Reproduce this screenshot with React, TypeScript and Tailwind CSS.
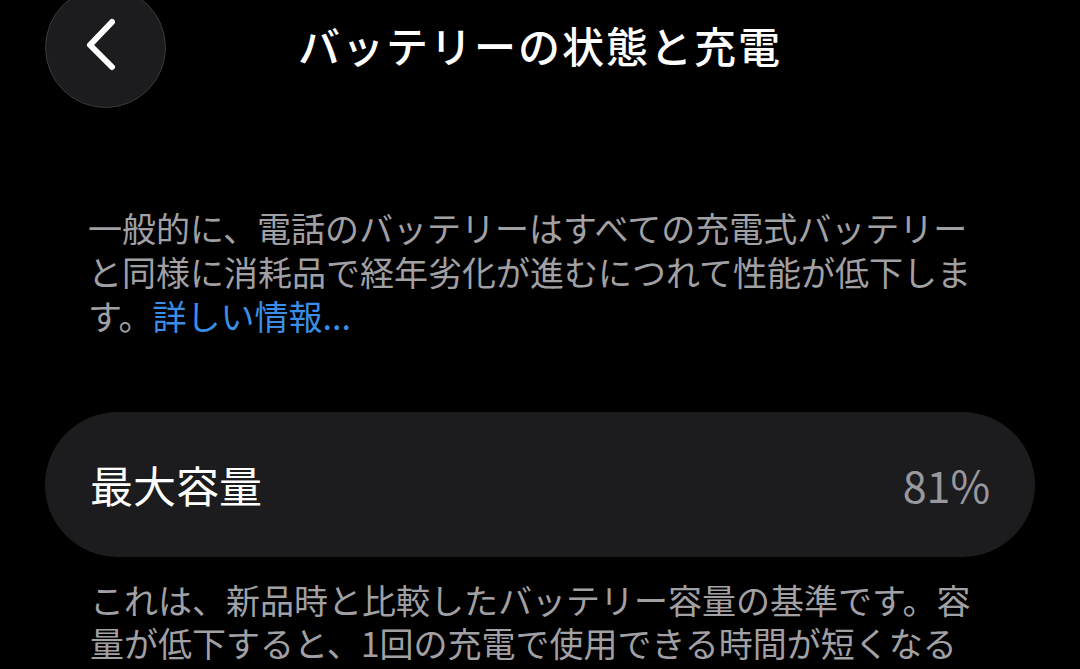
import React from 'react';

const jp = { fontFamily: '"Noto Sans CJK JP", "Noto Sans", sans-serif' };

function BackButton() {
  return (
    <button className="w-[121px] h-[121px] -mt-[13px] rounded-full bg-[#1c1c1e] border-[1.5px] border-[#3a3a3c] flex items-center justify-center">
      <svg width="60" height="60" viewBox="0 0 60 60" fill="none">
        <path d="M37 8 L15 31 L37 53" stroke="white" strokeWidth="6" strokeLinecap="round" strokeLinejoin="round" transform="translate(-1 -4)" />
      </svg>
    </button>
  );
}

export default function App() {
  return (
    <div className="w-[1080px] h-[669px] bg-black overflow-hidden text-white" style={jp}>
      {/* Header */}
      <div className="grid grid-cols-[1fr_auto_1fr] items-start px-[45px] h-[96px]">
        <div className="flex">
          <BackButton />
        </div>
        <h1 className="text-[42px] leading-[56px] mt-[17px] font-medium tracking-[2px]">バッテリーの状態と充電</h1>
        <div />
      </div>

      {/* Intro */}
      <p className="mt-[110px] ml-[88px] w-[900px] text-[34px] leading-[44px] text-[#a0a0a5]">
        一般的に、電話のバッテリーはすべての充電式バッテリーと同様に消耗品で経年劣化が進むにつれて性能が低下します。
        <span className="text-[#3a8ee8]">詳しい情報...</span>
      </p>

      {/* Max capacity card */}
      <div className="mt-[74px] mx-[45px] h-[145px] rounded-full bg-[#1c1c1e] flex items-center justify-between pl-[45px] pr-[45px]">
        <span className="text-[43px] text-white">最大容量</span>
        <span className="text-[43px] text-[#98989e]">81%</span>
      </div>

      <p className="mt-[21px] ml-[90px] w-[900px] text-[34px] leading-[43px] text-[#a0a0a5]">
        これは、新品時と比較したバッテリー容量の基準です。容量が低下すると、1回の充電で使用できる時間が短くなる可能性があります。
      </p>
    </div>
  );
}
